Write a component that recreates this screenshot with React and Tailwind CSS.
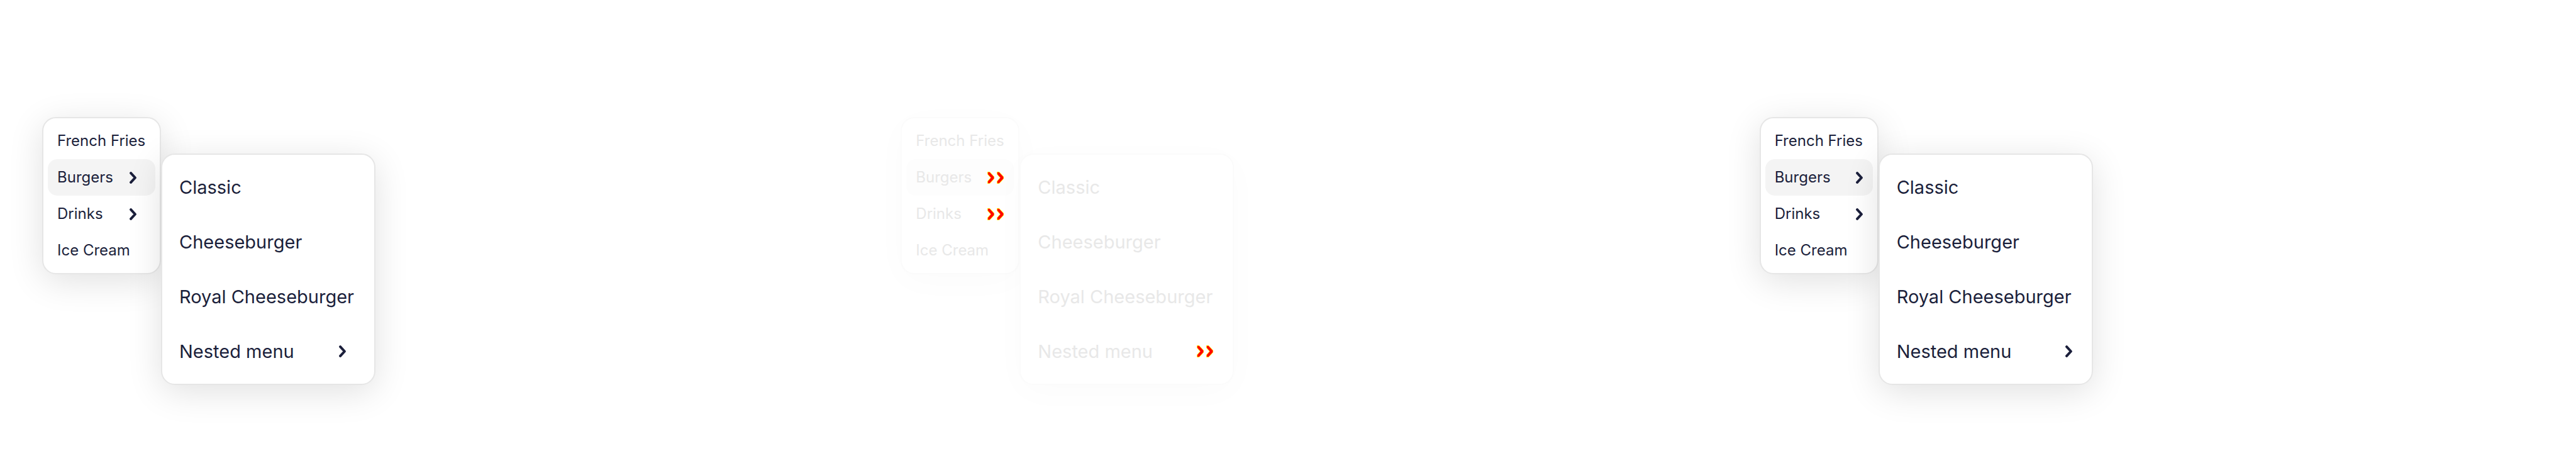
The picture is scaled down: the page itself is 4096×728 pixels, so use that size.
const mainItems = [
  { label: "French Fries" },
  { label: "Burgers", nested: true, active: true },
  { label: "Drinks", nested: true },
  { label: "Ice Cream" },
];

const subItems = [
  { label: "Classic" },
  { label: "Cheeseburger" },
  { label: "Royal Cheeseburger" },
  { label: "Nested menu", nested: true },
];

function Chevron() {
  return (
    <svg width="11" height="19" viewBox="0 0 11 19" fill="none" aria-hidden="true">
      <path d="M2.1 2.1 8.9 9.5 2.1 16.9" stroke="#1b1f3b" strokeWidth="4" strokeLinecap="round" strokeLinejoin="round" />
    </svg>
  );
}

function MarkedChevron() {
  return (
    <svg width="11" height="19" viewBox="0 0 11 19" fill="none" aria-hidden="true">
      <path d="M0 0h3.8L11 7.8v3.4L3.8 19H0v-4L5 9.5 0 4Z" fill="#ffff00" />
      <path d="M.8 .8H3.6L10.5 8.3v2.4L3.6 18.2H.8v-3L5.8 9.5 .8 3.8Z" fill="#ff0000" />
    </svg>
  );
}

function Arrow({ variant }) {
  if (variant === "diff") {
    return (
      <span className="flex gap-1">
        <MarkedChevron />
        <MarkedChevron />
      </span>
    );
  }
  return (
    <span className={variant === "before" ? "mr-[14px] flex" : "flex"}>
      <Chevron />
    </span>
  );
}

function Menu({ items, variant, large, label }) {
  const faded = variant === "diff";
  const tone = faded
    ? "border-[#fbfbfb] text-[#e8e8e8] shadow-[0_11px_55px_rgba(0,0,0,0.018)]"
    : "border-[#e6e6e6] text-[#1b1f3b] shadow-[0_11px_55px_rgba(0,0,0,0.12)]";
  const size = large ? "mt-[58px] w-[341px] p-2" : "w-[189px] p-[7px]";
  const row = large ? "h-[87px] pl-[19px] pr-[23px] text-[29px]" : "h-[58px] pl-[15px] pr-4 text-[24px]";
  const activeBg = faded ? "bg-[#fdfdfd]" : "bg-[#f4f4f4]";
  return (
    <ul aria-label={label} className={`rounded-[22px] border-2 bg-white ${tone} ${size}`}>
      {items.map((item) => (
        <li key={item.label}>
          <button
            type="button"
            className={`flex w-full items-center justify-between rounded-[15px] text-left whitespace-nowrap ${row} ${item.active ? activeBg : ""}`}
          >
            {item.label}
            {item.nested && <Arrow variant={variant} />}
          </button>
        </li>
      ))}
    </ul>
  );
}

function Panel({ variant }) {
  return (
    <section className="flex items-start pt-[186px] pb-[116px] pl-[67px]">
      <Menu items={mainItems} variant={variant} label="Menu" />
      <Menu items={subItems} variant={variant} label="Burgers" large />
    </section>
  );
}

export default function App() {
  return (
    <main className="grid min-h-screen grid-cols-3 bg-white font-['Inter','Liberation_Sans',sans-serif]">
      <Panel variant="before" />
      <Panel variant="diff" />
      <Panel variant="after" />
    </main>
  );
}
